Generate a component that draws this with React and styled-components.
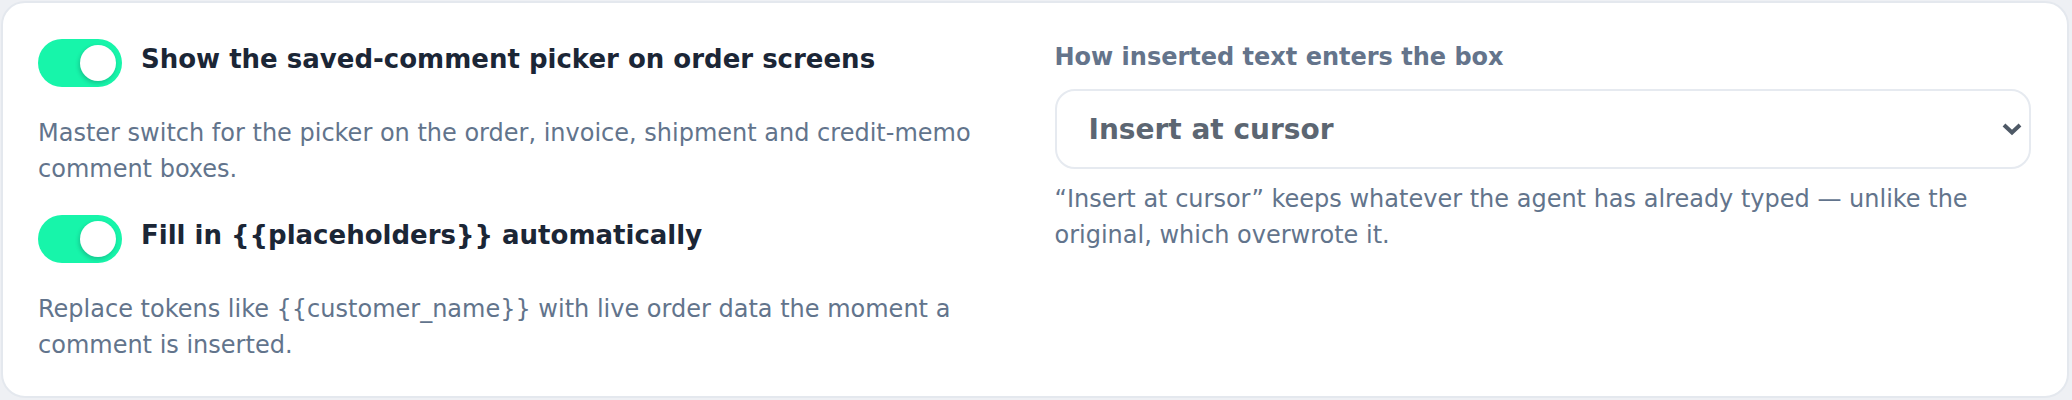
import React, { useState } from 'react';
import styled, { createGlobalStyle } from 'styled-components';

const GlobalStyle = createGlobalStyle`
  html, body {
    margin: 0;
    padding: 0;
    background: #eef0f4;
  }
  body {
    font-family: "DejaVu Sans", "Noto Sans", sans-serif;
    -webkit-font-smoothing: antialiased;
  }
  * {
    box-sizing: border-box;
  }
`;

const Card = styled.section`
  margin: 1px 3px 2px 1px;
  height: 397px;
  background: #ffffff;
  border: 2px solid #e4e8ee;
  border-radius: 24px;
  padding: 36px 36px 36px 35px;
  display: grid;
  grid-template-columns: 1fr 1fr;
  column-gap: 40px;
`;

const Column = styled.div`
  display: flex;
  flex-direction: column;
  gap: 28px;
  min-width: 0;
`;

const ToggleRow = styled.label`
  display: flex;
  align-items: center;
  gap: 19px;
  cursor: pointer;
`;

const Track = styled.button`
  position: relative;
  flex: none;
  width: 84px;
  height: 48px;
  padding: 0;
  border: none;
  border-radius: 24px;
  background: ${(p) => (p.$on ? '#17f5aa' : '#cbd5e1')};
  cursor: pointer;
  transition: background 0.2s ease;
`;

const Knob = styled.span`
  position: absolute;
  top: 6px;
  left: ${(p) => (p.$on ? '42px' : '6px')};
  width: 36px;
  height: 36px;
  border-radius: 50%;
  background: #ffffff;
  box-shadow: -1px 2px 4px rgba(15, 23, 42, 0.22);
  transition: left 0.2s ease;
`;

const ToggleTitle = styled.span`
  font-size: 26px;
  font-weight: 700;
  color: #1b2636;
  line-height: 1.2;
  margin-bottom: 6px;
`;

const Help = styled.p`
  margin: 0;
  font-size: 24px;
  line-height: 36px;
  color: #62748c;
`;

const FieldLabel = styled.div`
  font-size: 24px;
  line-height: 36px;
  font-weight: 700;
  color: #64748b;
  margin-bottom: 14px;
`;

const SelectBox = styled.div`
  display: flex;
  align-items: center;
  justify-content: space-between;
  height: 80px;
  padding: 0 7px 0 32px;
  border: 2px solid #e6eaf0;
  border-radius: 20px;
  background: #ffffff;
  cursor: pointer;
`;

const SelectValue = styled.span`
  font-size: 28px;
  font-weight: 700;
  color: #5c6672;
`;

const FieldHelp = styled(Help)`
  margin-top: 12px;
`;

const Chevron = () => (
  <svg width="20" height="14" viewBox="0 0 20 14" fill="none">
    <polyline
      points="2,3 10,10.5 18,3"
      stroke="#4e5966"
      strokeWidth="4"
      strokeLinecap="butt"
      strokeLinejoin="miter"
    />
  </svg>
);

const Toggle = ({ on, onChange, children }) => (
  <ToggleRow>
    <Track type="button" $on={on} onClick={() => onChange(!on)}>
      <Knob $on={on} />
    </Track>
    <ToggleTitle>{children}</ToggleTitle>
  </ToggleRow>
);

export default function App() {
  const [picker, setPicker] = useState(true);
  const [fill, setFill] = useState(true);

  return (
    <>
      <GlobalStyle />
      <Card>
        <Column>
          <Toggle on={picker} onChange={setPicker}>
            Show the saved-comment picker on order screens
          </Toggle>
          <Help>
            Master switch for the picker on the order, invoice, shipment and credit-memo comment boxes.
          </Help>
          <Toggle on={fill} onChange={setFill}>
            {'Fill in {{placeholders}} automatically'}
          </Toggle>
          <Help>
            {'Replace tokens like {{customer_name}} with live order data the moment a comment is inserted.'}
          </Help>
        </Column>
        <div>
          <FieldLabel>How inserted text enters the box</FieldLabel>
          <SelectBox>
            <SelectValue>Insert at cursor</SelectValue>
            <Chevron />
          </SelectBox>
          <FieldHelp>
            “Insert at cursor” keeps whatever the agent has already typed — unlike the original, which overwrote it.
          </FieldHelp>
        </div>
      </Card>
    </>
  );
}
